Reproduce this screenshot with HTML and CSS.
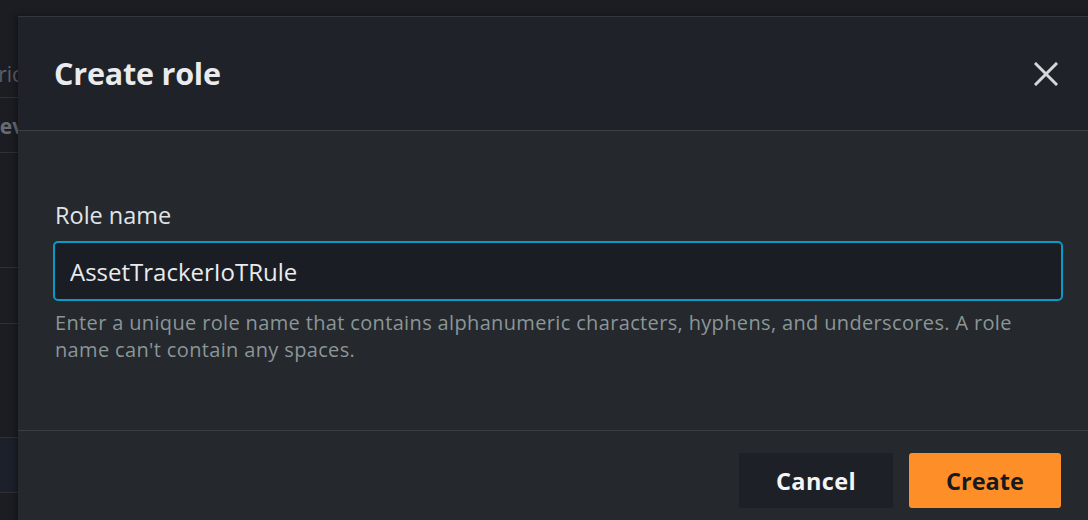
FILE: index.html
```html
<!DOCTYPE html>
<html lang="en">
<head>
<meta charset="utf-8">
<title>Create role</title>
<link rel="stylesheet" href="styles.css">
</head>
<body>
<div class="page">
  <div class="bg-list">
    <div class="bg-row r1"><span class="bg-text t1">Metric</span></div>
    <div class="bg-row r2"><span class="bg-text t2">Review</span></div>
    <div class="bg-row r3"></div>
    <div class="bg-row r4"></div>
    <div class="bg-row r5"></div>
    <div class="bg-row r6 selected"></div>
    <div class="bg-row r7"></div>
  </div>

  <div class="modal" role="dialog" aria-labelledby="modal-title">
    <div class="modal-header">
      <h2 id="modal-title" class="modal-title">Create role</h2>
      <button class="close-btn" aria-label="Close">
        <svg width="24" height="24" viewBox="0 0 24 24" aria-hidden="true">
          <path d="M2 2 L22 22 M22 2 L2 22" stroke="currentColor" stroke-width="3" stroke-linecap="square" fill="none"/>
        </svg>
      </button>
    </div>
    <div class="modal-body">
      <label class="field-label" for="role-name">Role name</label>
      <input id="role-name" class="field-input" type="text" value="AssetTrackerIoTRule">
      <p class="field-help">Enter a unique role name that contains alphanumeric characters, hyphens, and underscores. A role name can't contain any spaces.</p>
    </div>
    <div class="modal-footer">
      <button class="btn btn-cancel">Cancel</button>
      <button class="btn btn-primary">Create</button>
    </div>
  </div>
</div>
</body>
</html>
```

FILE: styles.css
```css
* { box-sizing: border-box; }

html, body {
  margin: 0;
  padding: 0;
  width: 1088px;
  height: 520px;
  overflow: hidden;
  background: #1b1d22;
  font-family: "Open Sans", "Noto Sans", "Liberation Sans", sans-serif;
}

.page {
  position: relative;
  width: 1088px;
  height: 520px;
  overflow: hidden;
}

/* Background page (dimmed, mostly covered by the modal) */
.bg-list {
  display: flex;
  flex-direction: column;
  width: 200px;
}

.bg-row {
  border-bottom: 1px solid #2e3137;
  display: flex;
  align-items: center;
}

.r1 { height: 98px; align-items: flex-end; padding-bottom: 9px; }
.r2 { height: 55px; }
.r3 { height: 115px; }
.r4 { height: 56px; }
.r5 { height: 114px; }
.r6 { height: 55px; }
.r7 { height: 40px; border-bottom: none; }

.selected { background: #1b202a; }

.bg-text {
  font-size: 21px;
  white-space: nowrap;
}

.t1 {
  color: #5a5f66;
  margin-left: -40px;
}

.t2 {
  color: #686c72;
  font-weight: 700;
  margin-left: -14px;
  padding-top: 2px;
}

/* Modal */
.modal {
  position: absolute;
  left: 18px;
  top: 16px;
  width: 1080px;
  height: 520px;
  background: #25282d;
  border-top: 1px solid #34373d;
  box-shadow: -2px 0 6px rgba(0, 0, 0, 0.35);
}

.modal-header {
  height: 114px;
  background: #1f2229;
  border-bottom: 1px solid #3d4047;
  display: flex;
  align-items: center;
  justify-content: space-between;
  padding: 0 40px 0 36px;
}

.modal-title {
  margin: 0;
  font-size: 30.5px;
  font-weight: 700;
  color: #e9ebed;
  letter-spacing: -0.2px;
  padding-bottom: 2px;
}

.close-btn {
  background: none;
  border: none;
  padding: 0;
  color: #d3d9d9;
  width: 24px;
  height: 24px;
  display: flex;
  align-items: center;
  justify-content: center;
  cursor: pointer;
}

.modal-body {
  height: 300px;
  border-bottom: 1px solid #3b3e45;
  padding: 68px 35px 0 35px;
  display: flex;
  flex-direction: column;
}

.field-label {
  font-size: 23.5px;
  line-height: 32px;
  color: #e1e4e6;
  padding-left: 2px;
  margin-bottom: 10px;
}

.field-input {
  width: 1010px;
  height: 60px;
  flex: 0 0 60px;
  background: #1a1d24;
  border: 2px solid #0a9ac6;
  border-radius: 5px;
  color: #e9ebed;
  font-family: inherit;
  font-size: 24px;
  padding: 0 15px;
  outline: none;
}

.field-help {
  margin: 8px 0 0 2px;
  font-size: 20px;
  letter-spacing: 0.35px;
  line-height: 27px;
  color: #8a9697;
}

.modal-footer {
  display: flex;
  justify-content: flex-end;
  gap: 16px;
  padding: 22px 37px 0 0;
}

.btn {
  height: 55px;
  border: none;
  border-radius: 3px;
  font-family: inherit;
  font-size: 23.5px;
  font-weight: 700;
  cursor: pointer;
}

.btn-cancel {
  width: 154px;
  background: #1d2027;
  color: #f4f5f6;
  letter-spacing: 0.4px;
}

.btn-primary {
  width: 152px;
  background: #fe8f28;
  color: #16191f;
}
```
